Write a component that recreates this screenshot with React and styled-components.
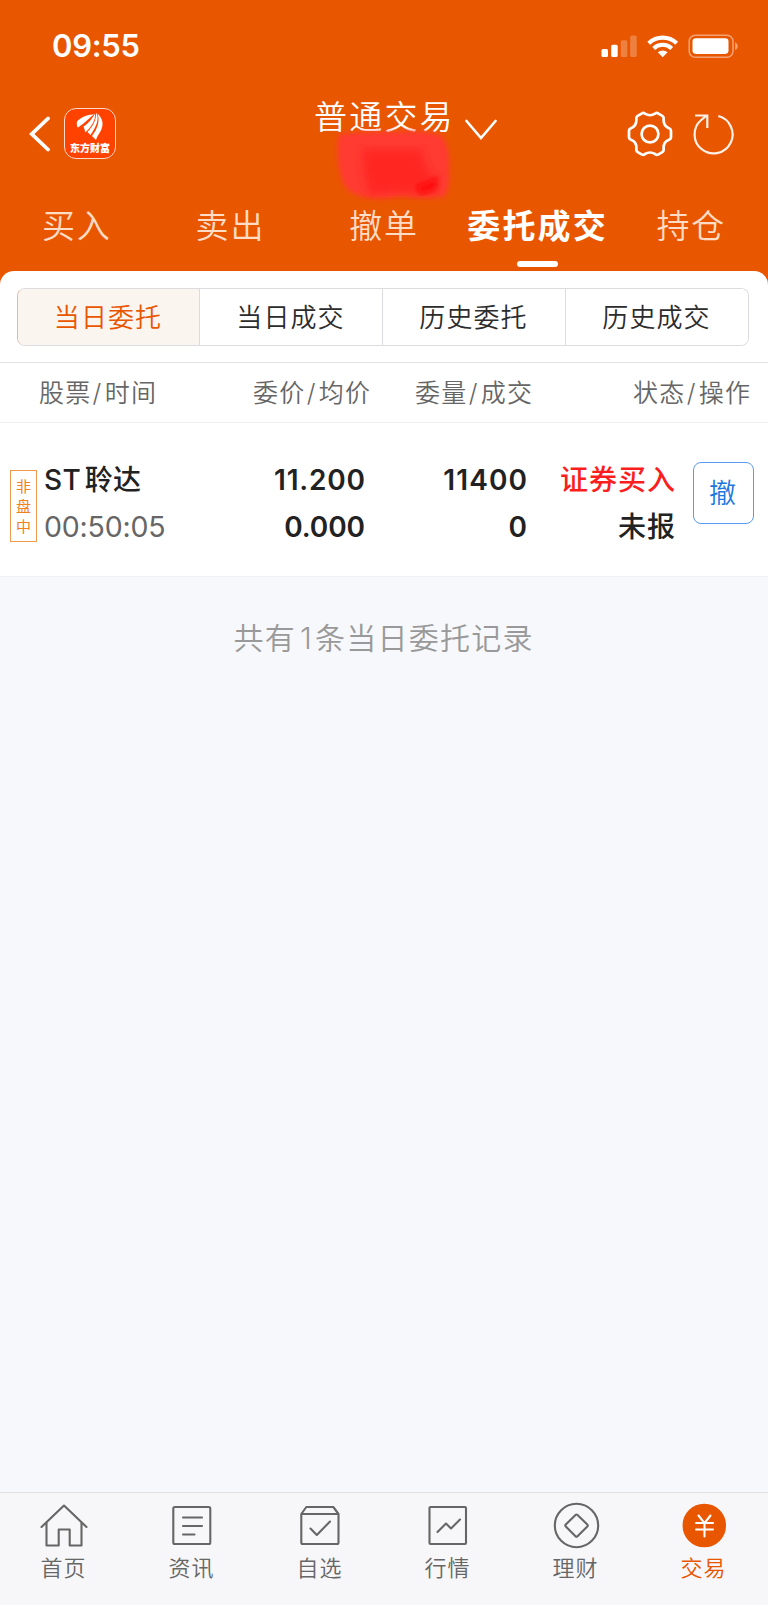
import React from 'react';
import styled, { createGlobalStyle, css } from 'styled-components';

const orange = '#e95600';
const grey = '#666';

const GlobalStyle = createGlobalStyle`
  * { box-sizing: border-box; }
  body {
    margin: 0;
    background: #f7f8fb;
    font-family: Inter, 'Noto Sans CJK SC', sans-serif;
    -webkit-font-smoothing: antialiased;
  }
  svg { display: block; flex: none; }
`;

const Page = styled.div`
  display: flex;
  flex-direction: column;
  width: 768px;
  height: 1605px;
  overflow: hidden;
  background: #f7f8fb;
`;

/* letter-spacing leaves a gap after the last glyph, take it back */
const spaced = size => css`
  letter-spacing: ${size}px;
  margin-right: ${-size}px;
`;

/* header */
const Header = styled.header`
  flex: none;
  height: 285px;
  margin-bottom: -14px;
  background: ${orange};
  color: #fff;
`;
const StatusBar = styled.div`
  display: flex;
  align-items: center;
  justify-content: space-between;
  height: 92px;
  padding: 0 29px 0 52px;
`;
const Clock = styled.span`
  font-size: 31px;
  font-weight: 600;
  line-height: 40px;
  letter-spacing: -0.3px;
`;
const TitleBar = styled.div`
  display: grid;
  grid-template-columns: 286px 1fr 165px;
  height: 98px;
`;
const TitleLeft = styled.div`
  display: flex;
  align-items: flex-start;
  gap: 14px;
  padding: 16px 0 0 29px;
`;
const BackIcon = styled.svg`
  margin-top: 8px;
`;
const Logo = styled.div`
  display: flex;
  flex-direction: column;
  align-items: center;
  width: 52px;
  height: 51px;
  padding-top: 3px;
  border: 1px solid #ffd9c8;
  border-radius: 12px;
  background: #ff4200;
`;
const LogoText = styled.span`
  font-family: 'Noto Sans CJK SC', sans-serif;
  font-size: 10px;
  font-weight: 900;
  line-height: 14px;
  white-space: nowrap;
`;
const TitleMiddle = styled.div`
  position: relative;
  display: flex;
  gap: 12px;
  padding-left: 28px;
`;
const Title = styled.h1`
  margin: 0;
  font-size: 33px;
  font-weight: 350;
  line-height: 50px;
  letter-spacing: 2.2px;
  margin-right: -2.2px;
  white-space: nowrap;
`;
const DownIcon = styled.svg`
  margin-top: 27px;
`;
/* account number scribbled out */
const Scribble = styled.svg`
  position: absolute;
  left: 42px;
  top: 34px;
`;
const TitleRight = styled.div`
  display: flex;
  gap: 19px;
  padding: 19px 0 0 24px;
`;

const Tabs = styled.nav`
  display: grid;
  grid-template-columns: repeat(5, 1fr);
`;
const Tab = styled.div`
  display: flex;
  flex-direction: column;
  align-items: center;
  color: ${props => (props.$active ? '#fff' : '#ffdcc5')};
  font-size: 33px;
  font-weight: ${props => (props.$active ? 600 : 350)};
  line-height: 71px;
  white-space: nowrap;

  span {
    height: 71px;
    padding-top: 1px;
    letter-spacing: ${props => (props.$active ? 2.2 : 1.8)}px;
  }

  &::after {
    content: '';
    width: 41px;
    height: 6px;
    border-radius: 3px;
    background: ${props => (props.$active ? '#fff' : 'transparent')};
  }
`;

/* order list */
const Panel = styled.section`
  flex: none;
  border-radius: 14px 14px 0 0;
  background: #fff;
`;
const Segments = styled.div`
  display: grid;
  grid-template-columns: 181px 183px 183px 1fr;
  height: 58px;
  margin: 0 19px 0 17px;
  border: 1px solid #dcdce0;
  border-left-color: #e5b8a4;
  border-radius: 8px;
  overflow: hidden;
`;
const SegmentsWrap = styled.div`
  height: 92px;
  padding-top: 17px;
  border-bottom: 1px solid #e2e2e4;
`;
const Segment = styled.div`
  display: flex;
  align-items: center;
  justify-content: center;
  padding: 2px 1px 0 0;
  border-left: ${props => (props.$first ? 0 : '1px solid #dcdce0')};
  background: ${props => (props.$active ? '#fbf5f0' : '#fff')};
  color: ${props => (props.$active ? orange : '#2c2c2c')};
  font-size: 26px;
  font-weight: 350;
  line-height: 40px;
  letter-spacing: 1.1px;
`;
const columns = css`
  display: grid;
  grid-template-columns: ${props => props.$cols};
`;
const ListHead = styled.div`
  ${columns}
  height: 60px;
  padding: 0 18px 0 39px;
  border-bottom: 1px solid #eeeef0;
  color: ${grey};
  font-size: 25px;
  font-weight: 350;
  line-height: 61px;
`;
const HeadCell = styled.div`
  height: 59px;
  text-align: ${props => (props.$left ? 'left' : 'right')};
  white-space: nowrap;
  span { ${spaced(1.3)} }
  i { font-style: normal; padding: 0 2px 0 1px; }
`;
const Order = styled.div`
  ${columns}
  height: 154px;
  padding: 34px 14px 0 10px;
  border-bottom: 1px solid #f0f0f2;
`;
const Tag = styled.div`
  width: 27px;
  height: 72px;
  margin-top: 13px;
  padding: 6px 5px;
  border: 1px solid #ee9b50;
  color: #f08020;
  font-size: 15px;
  line-height: 20px;
  text-align: center;
`;
const Cell = styled.div`
  display: flex;
  flex-direction: column;
  align-items: ${props => (props.$left ? 'flex-start' : 'flex-end')};
  font-size: 28px;
  line-height: 47px;
  white-space: nowrap;
`;
const Strong = styled.span`
  color: ${props => props.$color || '#222'};
  font-weight: 600;
  word-spacing: -4px;
  ${props => spaced(props.$gap || 0)}
`;
const Chinese = styled(Strong)`
  font-weight: 500;
`;
const Time = styled.span`
  margin-top: -1px;
  color: ${grey};
  font-size: 28.5px;
  letter-spacing: -0.2px;
`;
const CancelButton = styled.button`
  width: 61px;
  height: 62px;
  margin: 5px 0 0 18px;
  padding: 0 2px 4px 0;
  border: 1px solid #5b9cf0;
  border-radius: 8px;
  background: #fff;
  color: #1f78e0;
  font-family: inherit;
  font-size: 27px;
  font-weight: 350;
`;
const Summary = styled.p`
  flex: 1;
  margin: 0;
  padding-right: 2px;
  color: #999;
  font-size: 30px;
  font-weight: 350;
  line-height: 123px;
  text-align: center;
  span { ${spaced(1.25)} }
  b { font-weight: inherit; padding: 0 2px 0 4px; }
`;

/* bottom bar */
const BottomBar = styled.footer`
  flex: none;
  display: grid;
  grid-template-columns: repeat(6, 1fr);
  height: 113px;
  border-top: 1px solid #e1e1e3;
  background: #f7f7f9;
`;
const BottomItem = styled.div`
  display: flex;
  flex-direction: column;
  align-items: center;
  padding: 9px 1px 0 0;
  color: ${props => (props.$active ? orange : grey)};
  font-size: 22px;
  font-weight: 350;
  line-height: 34px;
  letter-spacing: 1px;

  svg {
    margin-bottom: 1px;
    fill: none;
    stroke: currentColor;
    stroke-width: 2.1;
    stroke-linejoin: round;
    stroke-linecap: round;
  }
`;

const StatusIcons = () => (
  <svg width="140" height="28" viewBox="0 0 140 28" fill="#fff">
    <rect x="2.5" y="17" width="6.5" height="8" rx="1.5" />
    <rect x="12.2" y="12.7" width="6.5" height="12.3" rx="1.5" />
    <rect x="21.8" y="8.3" width="6.5" height="16.7" rx="1.5" opacity=".25" />
    <rect x="31.2" y="3.5" width="6.5" height="21.5" rx="1.5" opacity=".25" />
    <g fill="none" stroke="#fff" strokeWidth="4.1">
      <path d="M49.7 11.2a20.5 20.5 0 0 1 28 0" />
      <path d="M54.7 16.4a13 13 0 0 1 18 0" />
    </g>
    <path d="M58.8 20.3a7.2 7.2 0 0 1 9.8 0l-4.9 4.9z" />
    <rect x="90.2" y="3.2" width="43.8" height="22" rx="6" fill="none" stroke="#fff" strokeOpacity=".45" strokeWidth="1.5" />
    <rect x="93.5" y="6.3" width="36" height="15.6" rx="3.3" />
    <path d="M136.1 10.2c3.6 1.6 3.6 6.4 0 8z" opacity=".45" />
  </svg>
);

const Gear = () => (
  <svg width="46" height="46" viewBox="0 0 46 46" fill="none" stroke="#fff" strokeWidth="2.7" strokeLinejoin="round">
    <path d="M15 2.3Q16.5 1.5 18 2.7Q23 5.8 28 2.7Q29.5 1.5 31 2.3L35.3 4.8Q36.9 5.8 36.6 7.5C36.3 12.8 38.2 16 42 17.2Q44 18 44 20V26Q44 28 42 28.7C38.2 30 36.3 33.2 36.6 38Q36.9 40.2 35.3 41.1L31 43.6Q29.5 44.3 28 43Q23 40 18 43Q16.5 44.3 15 43.6L10.7 41.1Q9.1 40.2 9.4 38C9.7 33.200 7.800 30 4 28.700Q2 28 2 26V20Q2 18 4 17.200C7.800 16 9.700 12.800 9.400 7.500Q9.100 5.800 10.700 4.800Z" />
    <circle cx="23" cy="23" r="8.400" />
  </svg>
);

const Refresh = () => (
  <svg width="44" height="46" viewBox="0 0 44 46" fill="none" stroke="#fff0e8" strokeWidth="2.2">
    <path d="M26.3 5A19 19 0 1 1 9.2 9L14.5 4.7M3 4.500H15.3V17" />
  </svg>
);

const icons = {
  home: (
    <>
      <path d="M1.5 25L24 3.5L46.5 25" />
      <path d="M6.5 21V43.5H18.7V27.5H29.7V43.5H41.5V21" />
    </>
  ),
  news: (
    <>
      <rect x="5.3" y="5" width="37" height="37" rx="1.5" />
      <path d="M15 15.5H34M15 24H34M15 32.5H26.5" />
    </>
  ),
  picks: (
    <>
      <path d="M5.3 12L10.3 5H37.3L42.5 12V40.5Q42.5 42 41 42H6.8Q5.3 42 5.3 40.5ZM5.3 12H42.5" />
      <path d="M14.5 26.5L20.8 33L34 19.5" />
    </>
  ),
  market: (
    <>
      <rect x="5.5" y="5" width="36.5" height="37" rx="1" />
      <path d="M13.5 30L22 21.5L27 26.5L36 17.5" />
    </>
  ),
  wealth: (
    <>
      <circle cx="24.5" cy="23.5" r="21.7" />
      <path d="M23.5 13Q24.5 12 25.5 13L35.3 22.5Q36.3 23.5 35.3 24.5L25.5 34.2Q24.5 35.2 23.5 34.2L13.8 24.5Q12.8 23.5 13.8 22.5Z" />
    </>
  ),
  trade: (
    <>
      <circle cx="24.3" cy="23.5" r="20.7" fill={orange} />
      <path stroke="#fff" d="M18.5 13.5L24.5 21.2L30.5 13.5M24.5 21.2V34.5M16 21H33M16 27.5H33" />
    </>
  ),
};

const tabs = ['买入', '卖出', '撤单', '委托成交', '持仓'];
const segments = ['当日委托', '当日成交', '历史委托', '历史成交'];
const heads = [['股票', '时间'], ['委价', '均价'], ['委量', '成交'], ['状态', '操作']];
const bottom = [
  ['home', '首页'],
  ['news', '资讯'],
  ['picks', '自选'],
  ['market', '行情'],
  ['wealth', '理财'],
  ['trade', '交易'],
];

export default function App() {
  return (
    <Page>
      <GlobalStyle />
      <Header>
        <StatusBar>
          <Clock>09:55</Clock>
          <StatusIcons />
        </StatusBar>
        <TitleBar>
          <TitleLeft>
            <BackIcon width="21" height="36" viewBox="0 0 21 36" fill="none" stroke="#fff" strokeWidth="3.8" strokeLinecap="round">
              <path d="M19 2.5L2.8 18L19 33.5" />
            </BackIcon>
            <Logo>
              <svg width="28" height="29" viewBox="0 0 28 29" fill="#fff">
                <path d="M1 9.5C5 5 12 2 18 2.5C13 6 10 10 2 15.5C1 15.5 .6 11 1 9.5Z" />
                <path d="M19 1.5C20 8 15 15 9.5 20.5L7.5 14.5C13 11 16 7 19 1.5Z" />
                <path d="M20 .5C24 7 20 15 14.5 23L11.5 20C17 14 20.5 8 20 .5Z" />
                <path d="M21.5 1.5C27 7 27.5 12 25.5 17C24 21 21.5 23 20 28L16 24C22 16 24 9 21.5 1.5Z" />
              </svg>
              <LogoText>东方财富</LogoText>
            </Logo>
          </TitleLeft>
          <TitleMiddle>
            <Title>普通交易</Title>
            <DownIcon width="32" height="22" viewBox="0 0 32 22" fill="none" stroke="#fff" strokeWidth="2.6" strokeLinecap="round">
              <path d="M1.5 2L16 19L30.5 2" />
            </DownIcon>
            <Scribble width="128" height="80" viewBox="0 0 128 80">
              <defs>
                <filter id="soft"><feGaussianBlur stdDeviation="2.5" /></filter>
                <filter id="softer"><feGaussianBlur stdDeviation="4" /></filter>
              </defs>
              <path filter="url(#soft)" fill="#ff3b30" d="M11 8Q40 5 65 6Q95 3 114 10Q123 24 121 45Q122 66 115 71Q94 74 75 70Q52 75 35 71Q18 67 14 54Q7 32 11 8Z" />
              <path filter="url(#softer)" fill="#ff2520" d="M34 23H94Q96 48 108 50L104 67H82Q62 64 42 69Q36 52 34 23Z" />
              <path filter="url(#soft)" fill="#ff0808" d="M88 60Q102 56 110 50L108 64L92 68Z" />
            </Scribble>
          </TitleMiddle>
          <TitleRight>
            <Gear />
            <Refresh />
          </TitleRight>
        </TitleBar>
        <Tabs>
          {tabs.map((label, i) => (
            <Tab key={label} $active={i === 3}><span>{label}</span></Tab>
          ))}
        </Tabs>
      </Header>

      <Panel>
        <SegmentsWrap>
          <Segments>
            {segments.map((label, i) => (
              <Segment key={label} $first={i === 0} $active={i === 0}>{label}</Segment>
            ))}
          </Segments>
        </SegmentsWrap>
        <ListHead $cols="120px 211px 162px 1fr">
          {heads.map(([a, b], i) => (
            <HeadCell key={a} $left={i === 0}><span>{a}<i>/</i>{b}</span></HeadCell>
          ))}
        </ListHead>
        <Order $cols="34px 140px 181px 162px 148px 1fr">
          <Tag>非盘中</Tag>
          <Cell $left>
            <Chinese $gap={0.3}>ST 聆达</Chinese>
            <Time>00:50:05</Time>
          </Cell>
          <Cell>
            <Strong $gap={0.8}>11.200</Strong>
            <Strong $gap={-0.1}>0.000</Strong>
          </Cell>
          <Cell>
            <Strong $gap={1.1}>11400</Strong>
            <Strong>0</Strong>
          </Cell>
          <Cell>
            <Chinese $color="#fa1e1e" $gap={1}>证券买入</Chinese>
            <Chinese $gap={1}>未报</Chinese>
          </Cell>
          <CancelButton>撤</CancelButton>
        </Order>
      </Panel>

      <Summary><span>共有<b>1</b>条当日委托记录</span></Summary>

      <BottomBar>
        {bottom.map(([icon, label]) => (
          <BottomItem key={icon} $active={icon === 'trade'}>
            <svg width="48" height="48" viewBox="0 0 48 48">{icons[icon]}</svg>
            <span>{label}</span>
          </BottomItem>
        ))}
      </BottomBar>
    </Page>
  );
}
